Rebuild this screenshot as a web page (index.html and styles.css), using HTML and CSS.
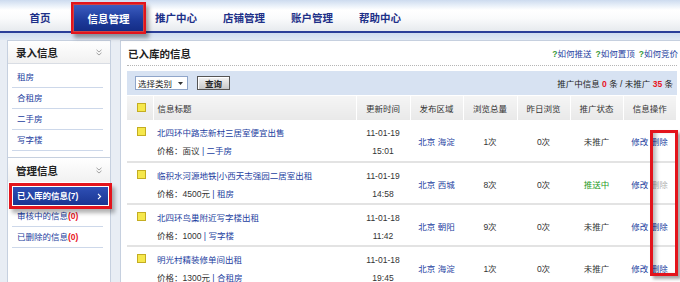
FILE: index.html
```html
<!DOCTYPE html>
<html lang="zh-CN">
<head>
<meta charset="utf-8">
<title>信息管理</title>
<link rel="stylesheet" href="styles.css">
</head>
<body>
<header class="top">
  <nav class="nav">
    <a class="nav-item">首页</a>
    <a class="nav-item active">信息管理</a>
    <a class="nav-item">推广中心</a>
    <a class="nav-item">店铺管理</a>
    <a class="nav-item">账户管理</a>
    <a class="nav-item">帮助中心</a>
  </nav>
</header>
<div class="rule"></div>
<div class="band"></div>

<div class="layout">
  <aside class="side">
    <section class="sec">
      <div class="sec-head">录入信息
        <svg class="chev" width="6" height="7" viewBox="0 0 6 7"><path d="M0.5 0.8l2.5 2.2 2.5-2.2M0.5 3.8l2.5 2.2 2.5-2.2" fill="none" stroke="#9a9a9a" stroke-width="0.9"/></svg>
      </div>
      <ul class="sec-list">
        <li><a>租房</a></li>
        <li><a>合租房</a></li>
        <li><a>二手房</a></li>
        <li><a>写字楼</a></li>
      </ul>
    </section>
    <section class="sec sec-2">
      <div class="sec-head">管理信息
        <svg class="chev" width="6" height="7" viewBox="0 0 6 7"><path d="M0.5 0.8l2.5 2.2 2.5-2.2M0.5 3.8l2.5 2.2 2.5-2.2" fill="none" stroke="#9a9a9a" stroke-width="0.9"/></svg>
      </div>
      <ul class="sec-list">
        <li class="cur"><a>已入库的信息(7)</a>
          <svg width="5" height="7" viewBox="0 0 5 7"><path d="M1 0.8l2.6 2.7L1 6.2" fill="none" stroke="#fff" stroke-width="1.1"/></svg>
        </li>
        <li><a>审核中的信息<b class="red">(0)</b></a></li>
        <li><a>已删除的信息<b class="red">(0)</b></a></li>
      </ul>
    </section>
  </aside>

  <main class="main">
    <div class="main-head">
      <h2 class="title">已入库的信息</h2>
      <div class="help">
        <a><i>?</i>如何推送</a>
        <a><i>?</i>如何置顶</a>
        <a><i>?</i>如何竞价</a>
      </div>
    </div>

    <div class="filter">
      <div class="filter-left">
        <span class="select">选择类别
          <svg width="5" height="3" viewBox="0 0 5 3"><path d="M0 0h5L2.5 3z" fill="#333"/></svg>
        </span>
        <span class="btn">查询</span>
      </div>
      <div class="stat">推广中信息 <b class="red">0</b> 条 / 未推广 <b class="red">35</b> 条</div>
    </div>

    <table class="list">
      <colgroup>
        <col class="c-chk"><col class="c-title"><col class="c-w54"><col class="c-w53"><col class="c-w54"><col class="c-w53"><col class="c-w53"><col class="c-w53">
      </colgroup>
      <thead>
        <tr>
          <th class="chk"><span class="box"></span></th>
          <th class="th-title">信息标题</th>
          <th>更新时间</th>
          <th>发布区域</th>
          <th>浏览总量</th>
          <th>昨日浏览</th>
          <th>推广状态</th>
          <th>信息操作</th>
        </tr>
      </thead>
      <tbody>
        <tr>
          <td class="chk"><span class="box"></span></td>
          <td class="two"><a>北四环中路志新村三居室便宜出售</a><br><span class="price">价格：面议 <a>|</a> <a>二手房</a></span></td>
          <td class="two c">11-01-19<br>15:01</td>
          <td class="one c"><a>北京 海淀</a></td>
          <td class="one c">1次</td>
          <td class="one c">0次</td>
          <td class="one c">未推广</td>
          <td class="one c"><a>修改</a> <a>删除</a></td>
        </tr>
        <tr>
          <td class="chk"><span class="box"></span></td>
          <td class="two"><a>临积水河源地铁|小西天志强园二居室出租</a><br><span class="price">价格：4500元 <a>|</a> <a>租房</a></span></td>
          <td class="two c">11-01-19<br>14:58</td>
          <td class="one c"><a>北京 西城</a></td>
          <td class="one c">8次</td>
          <td class="one c">0次</td>
          <td class="one c green">推送中</td>
          <td class="one c"><a>修改</a> <span class="off">删除</span></td>
        </tr>
        <tr>
          <td class="chk"><span class="box"></span></td>
          <td class="two"><a>北四环鸟巢附近写字楼出租</a><br><span class="price">价格：1000 <a>|</a> <a>写字楼</a></span></td>
          <td class="two c">11-01-18<br>11:42</td>
          <td class="one c"><a>北京 朝阳</a></td>
          <td class="one c">9次</td>
          <td class="one c">0次</td>
          <td class="one c">未推广</td>
          <td class="one c"><a>修改</a> <a>删除</a></td>
        </tr>
        <tr>
          <td class="chk"><span class="box"></span></td>
          <td class="two"><a>明光村精装修单间出租</a><br><span class="price">价格：1300元 <a>|</a> <a>合租房</a></span></td>
          <td class="two c">11-01-18<br>19:45</td>
          <td class="one c"><a>北京 海淀</a></td>
          <td class="one c">1次</td>
          <td class="one c">0次</td>
          <td class="one c">未推广</td>
          <td class="one c"><a>修改</a> <a>删除</a></td>
        </tr>
      </tbody>
    </table>

    <div class="mark"></div>
  </main>
</div>
</body>
</html>
```

FILE: styles.css
```css
* { box-sizing: border-box; margin: 0; padding: 0; }

body {
  width: 680px;
  height: 282px;
  overflow: hidden;
  background: #e8edf4;
  font-family: "Liberation Sans", "Noto Sans CJK SC", sans-serif;
  font-size: 8.5px;
  color: #333;
}

a { color: #2340a0; text-decoration: none; }
ul { list-style: none; }
.red { color: #e8141e; font-weight: bold; }

/* top navigation */
.top {
  height: 31px;
  background: linear-gradient(#cddbef 0, #e6eef8 5px, #ffffff 10px, #fafbfc 18px, #e7eaee 31px);
}
.nav { display: flex; padding-left: 6px; height: 31px; }
.nav-item {
  width: 68px;
  display: flex;
  align-items: center;
  justify-content: center;
  padding-top: 3px;
  font-size: 10.5px;
  font-weight: bold;
  color: #1d3088;
}
.nav-item.active {
  position: relative;
  z-index: 2;
  margin-top: 5px;
  height: 26px;
  padding-top: 0;
  width: 69px;
  margin-right: -1px;
  color: #fff;
  background: linear-gradient(#3b5cc0, #1d3a9a 60%, #142d86);
  box-shadow: 0 0 0 1px #c44, 0 0 0 3px #e3141c, 3px 4px 4px 3px rgba(0,0,0,.35);
}
.rule { height: 2px; background: #2b3e98; }
.band { height: 7px; background: linear-gradient(#cfdcf0, #e2e9f3); }

/* layout */
.layout { display: flex; gap: 9px; padding-left: 7px; height: 242px; }

/* sidebar */
.side {
  width: 104px;
  flex: none;
  background: #fff;
  border: 1px solid #c6d0df;
  border-bottom: none;
}
.sec-head {
  height: 23px;
  display: flex;
  align-items: center;
  justify-content: space-between;
  padding: 0 8px 0 8px;
  font-size: 10.5px;
  font-weight: bold;
  color: #222;
  background: linear-gradient(#ffffff, #f1f1f1);
  border-bottom: 1px solid #d9dde4;
}
.sec-list { padding: 3px 7px 6px 4px; }
.sec-list li {
  height: 21px;
  line-height: 20px;
  padding-left: 5px;
  border-bottom: 1px solid #cdd8ea;
}
.sec-2 { border-top: 1px solid #c6d0df; }
.sec-2 .sec-head { height: 24px; border-bottom: none; }
.sec-2 .sec-list { padding-top: 5px; }
.sec-list li.cur {
  position: relative;
  z-index: 1;
  height: 18px;
  line-height: 18px;
  margin: 0 -5px 1px 1px;
  padding: 0 6px 0 4px;
  border-bottom: none;
  display: flex;
  align-items: center;
  justify-content: space-between;
  background: linear-gradient(#2e4fb5, #1a3592);
  box-shadow: 0 0 0 1px #fff, 0 0 0 4px #e3141c, 3px 4px 4px 4px rgba(0,0,0,.3);
}
.sec-list li.cur a { color: #fff; font-weight: bold; }

/* main */
.main {
  flex: 1;
  position: relative;
  background: #fff;
  border: 1px solid #c6d0df;
  border-right: none;
  border-bottom: none;
  padding: 0 3px 0 6px;
}
.main-head {
  height: 25px;
  display: flex;
  align-items: center;
  justify-content: space-between;
  padding-left: 1px;
  border-bottom: 1px dotted #b5b5b5;
}
.title { font-size: 10.5px; font-weight: bold; color: #222; }
.help { display: flex; gap: 4px; margin-right: -1px; }
.help i { font-style: normal; font-weight: bold; color: #3a9a3a; }

.filter {
  margin-top: 5px;
  height: 24px;
  display: flex;
  align-items: center;
  justify-content: space-between;
  padding: 0 4px 0 8px;
  background: #d7e2f2;
}
.filter-left { display: flex; align-items: center; gap: 9px; }
.select {
  width: 53px;
  height: 14px;
  display: flex;
  align-items: center;
  justify-content: space-between;
  padding: 0 4px 0 2px;
  background: #fff;
  border: 1px solid #8fa5c9;
  color: #222;
}
.btn {
  width: 33px;
  height: 14px;
  display: flex;
  align-items: center;
  justify-content: center;
  font-weight: bold;
  color: #222;
  background: linear-gradient(#f4f4f4, #c9c9c9);
  border: 1px solid #555;
  box-shadow: inset 1px 1px 0 #fff;
}
.stat { color: #222; }

/* table */
.list {
  margin-top: 1px;
  width: 549px;
  border-collapse: collapse;
  table-layout: fixed;
}
.c-chk { width: 26px; }
.c-title { width: 203px; }
.c-w54 { width: 54px; }
.c-w53 { width: 53px; }
.list th {
  height: 24px;
  font-weight: normal;
  color: #333;
  background: linear-gradient(#f5f5f5, #e9e9e9);
  border-left: 1px solid #fff;
  text-align: center;
}
.list th:first-child { border-left: none; }
.list th.th-title { text-align: left; padding-left: 4px; }
.list th.chk { padding: 7px 0 0 10px; vertical-align: top; text-align: left; }

.box {
  display: block;
  width: 9px;
  height: 9px;
  background: #f6e84c;
  border: 1px solid #c4ad22;
}

.list td {
  height: 42px;
  vertical-align: top;
  border-bottom: 2px solid #e3e3e3;
  line-height: 18px;
}
.list td.chk { padding: 7px 0 0 10px; }
.list td.two { padding: 4px 0 0 4px; }
.list td.two.c { padding-left: 0; }
.list td.one { padding-top: 13px; }
.list td.c { text-align: center; }
.price { color: #333; }
.green { color: #1e9a1e; }
.off { color: #b2b2b2; }

/* annotation box over the operations column */
.mark {
  position: absolute;
  left: 529px;
  top: 89px;
  width: 28px;
  height: 146px;
  border: 3px solid #e3141c;
  box-shadow: inset 5px 0 4px -2px rgba(0,0,0,.28), 3px 3px 3px rgba(0,0,0,.35);
}
```
